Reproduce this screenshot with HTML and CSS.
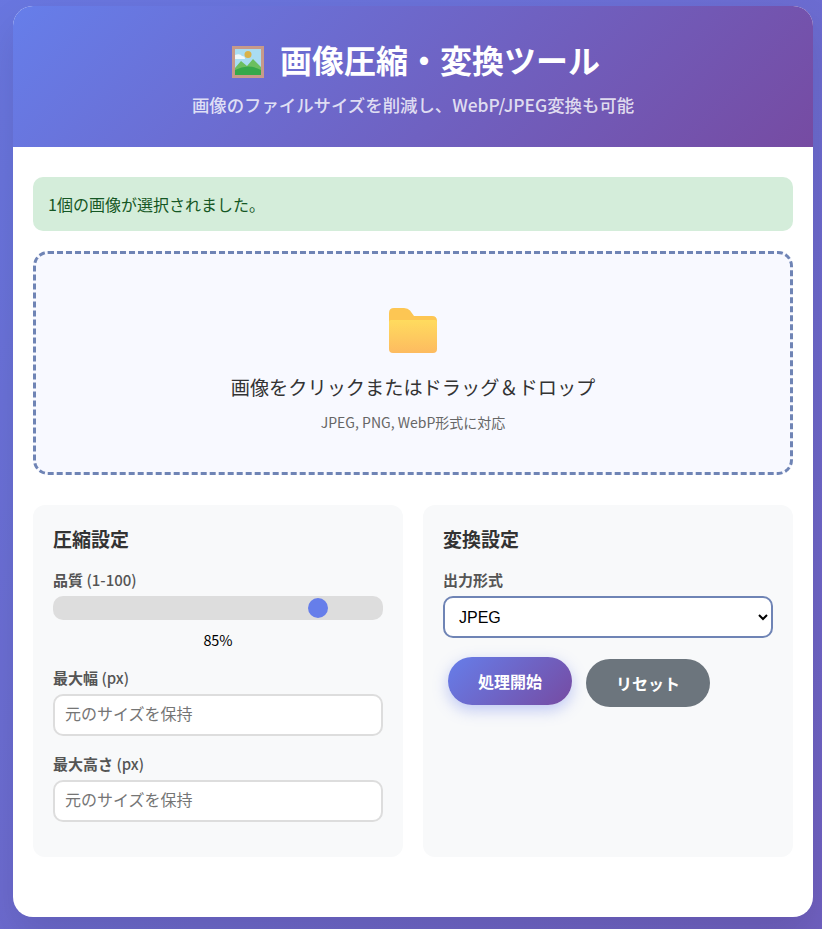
FILE: index.html
```html
<!DOCTYPE html>
<html lang="ja">
<head>
<meta charset="utf-8">
<title>画像圧縮・変換ツール</title>
<link rel="stylesheet" href="styles.css">
</head>
<body>
<main class="card">
  <header class="hero">
    <h1 class="hero-title">
      <svg class="pic-icon" viewBox="0 0 32 32" aria-hidden="true">
        <rect width="32" height="32" fill="#c79a8a"/>
        <rect x="3" y="3" width="26" height="26" fill="#a9dcf2"/>
        <path d="M3 9q5-2 7 1q3 0 3 3H3z" fill="#eef7fb"/>
        <circle cx="16" cy="8.500" r="3.500" fill="#d9b24a"/>
        <path d="M3 22l6-7 6 5 6-7 8 8v8H3z" fill="#6bbf5f"/>
        <path d="M3 29v-5q13-7 26 0v5z" fill="#35a84a"/>
      </svg>
      <span>画像圧縮・変換ツール</span>
    </h1>
    <p class="hero-sub">画像のファイルサイズを削減し、WebP/JPEG変換も可能</p>
  </header>
  <div class="content">
    <div class="alert">1個の画像が選択されました。</div>
    <section class="drop">
      <svg class="folder" viewBox="0 0 48 45" aria-hidden="true">
        <defs>
          <linearGradient id="folderFront" x1="0" y1="0" x2="0" y2="1">
            <stop offset="0" stop-color="#ffdb5e"/>
            <stop offset="1" stop-color="#fdbb60"/>
          </linearGradient>
        </defs>
        <path d="M0 5q0-5 5-5h10q4 0 6 2.500l4 5.500h18q5 0 5 5v8H0z" fill="#fdc653"/>
        <path d="M0 14q0-2 2-2h44q2 0 2 2v27q0 4-4 4H4q-4 0-4-4z" fill="url(#folderFront)"/>
      </svg>
      <p class="drop-title">画像をクリックまたはドラッグ＆ドロップ</p>
      <p class="drop-note">JPEG, PNG, WebP形式に対応</p>
    </section>
    <div class="panels">
      <section class="panel">
        <h3 class="panel-title">圧縮設定</h3>
        <div class="field">
          <label class="label" for="quality">品質 <span class="label-unit">(1-100)</span></label>
          <input class="range" id="quality" type="range" min="1" max="100" step="0.1" value="82.4">
          <div class="range-value">85%</div>
        </div>
        <div class="field">
          <label class="label" for="w">最大幅 <span class="label-unit">(px)</span></label>
          <input class="input" id="w" type="number" placeholder="元のサイズを保持">
        </div>
        <div class="field">
          <label class="label" for="h">最大高さ <span class="label-unit">(px)</span></label>
          <input class="input" id="h" type="number" placeholder="元のサイズを保持">
        </div>
      </section>
      <section class="panel">
        <h3 class="panel-title">変換設定</h3>
        <div class="field">
          <label class="label" for="fmt">出力形式</label>
          <select class="select" id="fmt">
            <option>JPEG</option>
            <option>PNG</option>
            <option>WebP</option>
          </select>
        </div>
        <div class="actions">
          <button class="btn btn-primary" type="button">処理開始</button>
          <button class="btn btn-secondary" type="button">リセット</button>
        </div>
      </section>
    </div>
  </div>
</main>
</body>
</html>
```
FILE: styles.css
```css
* { box-sizing: border-box; }
html, body { margin: 0; height: 100%; }
body {
  padding: 6px 9px 12px 13px;
  background: linear-gradient(135deg, #667eea, #764ba2);
  background-size: 2000px 2000px;
  background-position: -300px -300px;
  font-family: "Noto Sans CJK JP", "Liberation Sans", sans-serif;
  color: #333;
  overflow: hidden;
}
.card {
  width: 800px;
  height: 911px;
  background: #fff;
  border-radius: 20px;
  overflow: hidden;
  box-shadow: 0 20px 40px rgba(0,0,0,.1);
}
.hero {
  height: 141px;
  padding: 28px 30px 0;
  background: linear-gradient(135deg, #667eea, #764ba2);
  color: #fff;
  text-align: center;
}
.hero-title {
  margin: 0 0 9px;
  padding-left: 6px;
  display: flex;
  justify-content: center;
  align-items: center;
  gap: 16px;
  font-size: 32px;
  line-height: 50px;
  font-weight: 700;
}
.pic-icon { width: 32px; height: 32px; flex: none; margin-top: 6px; }
.hero-sub {
  margin: 0;
  font-size: 17.4px;
  line-height: 24px;
  font-weight: 500;
  color: rgba(255,255,255,.8);
}
.content { padding: 30px 20px; }
.alert {
  height: 54px;
  padding: 0 15px;
  display: flex;
  align-items: center;
  background: #d4edda;
  color: #155724;
  border-radius: 10px;
  font-size: 16px;
  margin-bottom: 20px;
}
.drop {
  height: 224px;
  border: 3px dashed #6f84b5;
  border-radius: 15px;
  background: #f8f9ff;
  text-align: center;
  padding-top: 54px;
  margin-bottom: 30px;
}
.folder { width: 48px; height: 45px; display: block; margin: 0 auto; }
.drop-title { margin: 20px 0 0; font-size: 19.2px; line-height: 28px; color: #333; }
.drop-note { margin: 11px 0 0; font-size: 14px; line-height: 20px; color: #666; }
.panels { display: grid; grid-template-columns: 1fr 1fr; gap: 20px; }
.panel {
  height: 352px;
  padding: 20px;
  background: #f8f9fa;
  border-radius: 12px;
}
.panel-title { margin: 0 0 17px; font-size: 19px; line-height: 28px; font-weight: 700; color: #333; }
.field { margin-bottom: 18px; }
.label { display: block; margin-bottom: 6px; font-size: 15px; line-height: 20px; font-weight: 700; color: #555; }
.label-unit { font-weight: 500; }
.range {
  -webkit-appearance: none;
  appearance: none;
  display: block;
  width: 100%;
  height: 24px;
  margin: 0;
  background: #ddd;
  border-radius: 10px;
  outline: none;
}
.range::-webkit-slider-thumb {
  -webkit-appearance: none;
  width: 20px;
  height: 20px;
  border-radius: 50%;
  background: #667eea;
}
.range-value { text-align: center; font-size: 14.4px; line-height: 21px; margin-top: 9px; color: #000; }
.input {
  display: block;
  width: 100%;
  height: 42px;
  padding: 0 10px 5px;
  border: 2px solid #ddd;
  border-radius: 10px;
  background: #fff;
  font: 16px "Noto Sans CJK JP", sans-serif;
}
.input::placeholder { color: #757575; }
.select {
  display: block;
  width: 100%;
  height: 42px;
  padding: 0 10px;
  border: 2px solid #6f84b5;
  border-radius: 10px;
  background: #fff;
  font: 16px "Liberation Sans", sans-serif;
  color: #000;
}
.actions { display: flex; align-items: center; gap: 14px; padding: 0 5px; margin-top: 21px; }
.btn {
  width: 124px;
  height: 48px;
  border: 0;
  border-radius: 25px;
  color: #fff;
  font: 700 16px "Noto Sans CJK JP", sans-serif;
}
.btn-primary {
  background: linear-gradient(135deg, #667eea, #764ba2);
  box-shadow: 0 5px 15px rgba(102,126,234,.4);
  position: relative;
  top: -2px;
}
.btn-secondary { background: #6c757d; }
```
